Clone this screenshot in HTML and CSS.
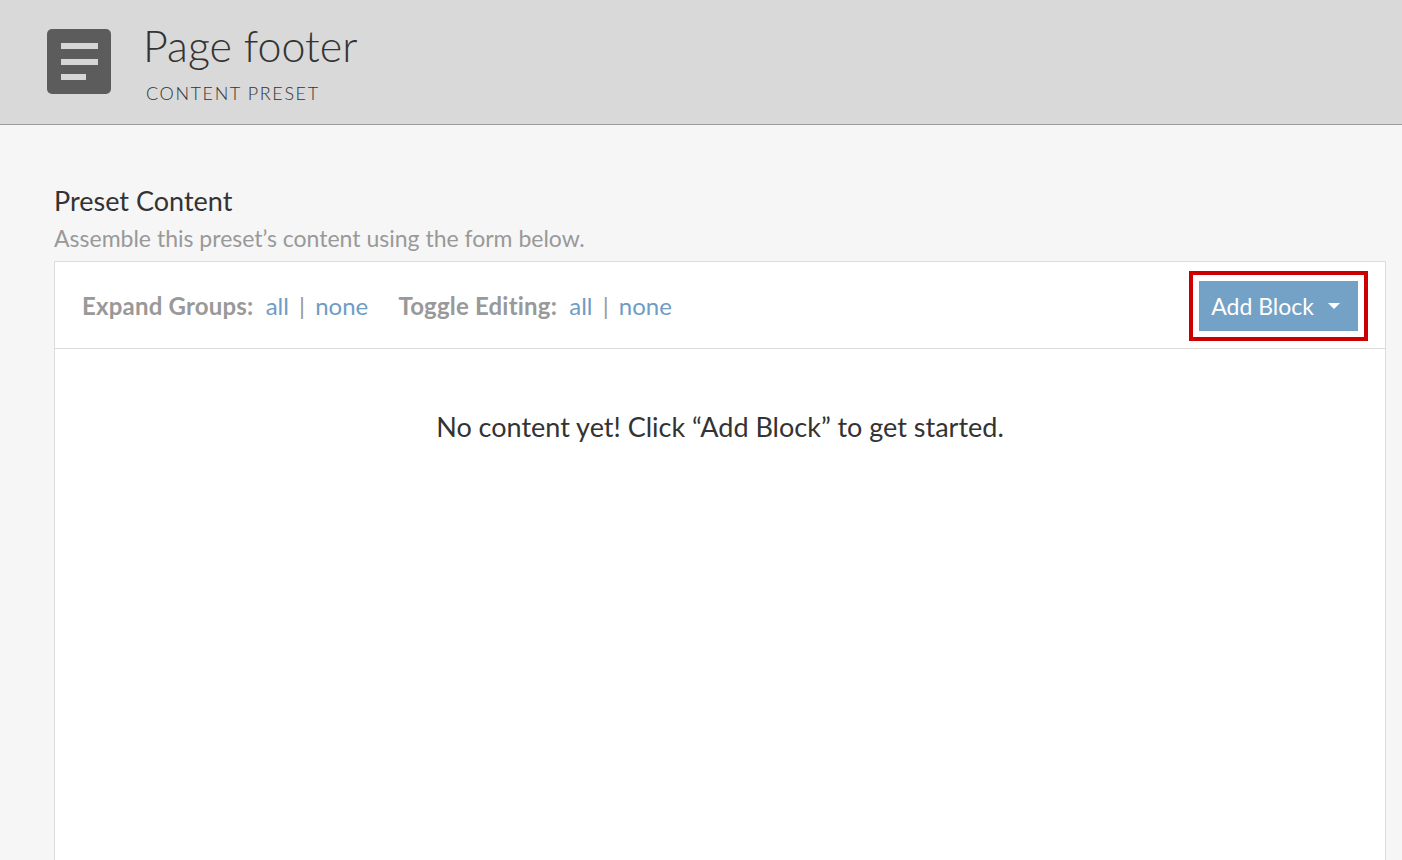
FILE: index.html
```html
<!DOCTYPE html>
<html lang="en">
<head>
    <meta charset="UTF-8">
    <meta name="viewport" content="width=device-width, initial-scale=1.0">
    <title>Page footer - Content Preset</title>
    <link rel="stylesheet" href="styles.css">
</head>
<body>
    <div class="page-header">
        <div class="header-icon">
            <svg width="64" height="65" viewBox="0 0 64 65">
                <rect x="0" y="0" width="64" height="65" rx="5" fill="#5c5c5c"/>
                <rect x="14" y="14" width="37" height="6" fill="#d6d6d6"/>
                <rect x="14" y="30" width="37" height="6" fill="#d6d6d6"/>
                <rect x="14" y="45" width="25" height="6" fill="#d6d6d6"/>
            </svg>
        </div>
        <div class="header-text">
            <h1>Page footer</h1>
            <div class="subtitle">CONTENT PRESET</div>
        </div>
    </div>

    <div class="content">
        <h2>Preset Content</h2>
        <p class="hint">Assemble this preset’s content using the form below.</p>

        <div class="panel">
            <div class="toolbar">
                <div class="toggles">
                    <span class="label">Expand Groups:</span>
                    <a href="#">all</a>
                    <span class="sep">|</span>
                    <a href="#">none</a>
                    <span class="label spaced">Toggle Editing:</span>
                    <a href="#">all</a>
                    <span class="sep">|</span>
                    <a href="#">none</a>
                </div>
                <button class="add-block">Add Block <span class="caret"></span></button>
            </div>
            <div class="empty">No content yet! Click “Add Block” to get started.</div>
        </div>
    </div>
</body>
</html>
```

FILE: styles.css
```css
body {
    margin: 0;
    font-family: Lato, "Liberation Sans", sans-serif;
    background-color: #f6f6f6;
    color: #333;
}
.page-header {
    display: flex;
    align-items: flex-start;
    height: 124px;
    background-color: #d9d9d9;
    border-bottom: 1px solid #9a9a9a;
    box-sizing: content-box;
}
.header-icon {
    margin: 29px 0 0 47px;
    height: 65px;
}
.header-text {
    margin: 20px 0 0 32px;
}
.header-text h1 {
    margin: 0;
    font-size: 43px;
    font-weight: 300;
    line-height: 52px;
    color: #333;
}
.subtitle {
    margin: 10px 0 0 3px;
    font-size: 18px;
    font-weight: 300;
    letter-spacing: 1.6px;
    color: #333;
}
.content {
    padding: 60px 16px 0 54px;
}
.content h2 {
    margin: 0;
    font-size: 27px;
    font-weight: 400;
    line-height: 32px;
}
.hint {
    margin: 8px 0 0;
    font-size: 23px;
    line-height: 26px;
    color: #999;
}
.panel {
    margin-top: 10px;
    background-color: #fff;
    border: 1px solid #dcdcdc;
    height: 620px;
}
.toolbar {
    display: flex;
    align-items: center;
    justify-content: space-between;
    height: 86px;
    padding: 0 27px 0 27px;
    border-bottom: 1px solid #dcdcdc;
}
.toggles {
    font-size: 24px;
    padding-top: 1px;
}
.toggles .label {
    font-weight: 700;
    letter-spacing: 0.2px;
    color: #999;
    margin-right: 6px;
}
.toggles .spaced {
    margin-left: 24px;
}
.toggles a {
    color: #6f9cc4;
    text-decoration: none;
}
.toggles .sep {
    color: #999;
    margin: 0 4px;
}
.add-block {
    display: flex;
    align-items: center;
    height: 50px;
    padding: 0 18px 0 12px;
    background-color: #74a1c6;
    color: #fff;
    border: none;
    font-family: inherit;
    font-size: 23px;
    outline: 4px solid #cc0000;
    outline-offset: 6px;
    margin-top: 2px;
}
.caret {
    display: inline-block;
    margin-left: 14px;
    border-left: 6px solid transparent;
    border-right: 6px solid transparent;
    border-top: 6px solid #fff;
}
.empty {
    padding-top: 62px;
    text-align: center;
    font-size: 27px;
    line-height: 32px;
    color: #333;
}
```
